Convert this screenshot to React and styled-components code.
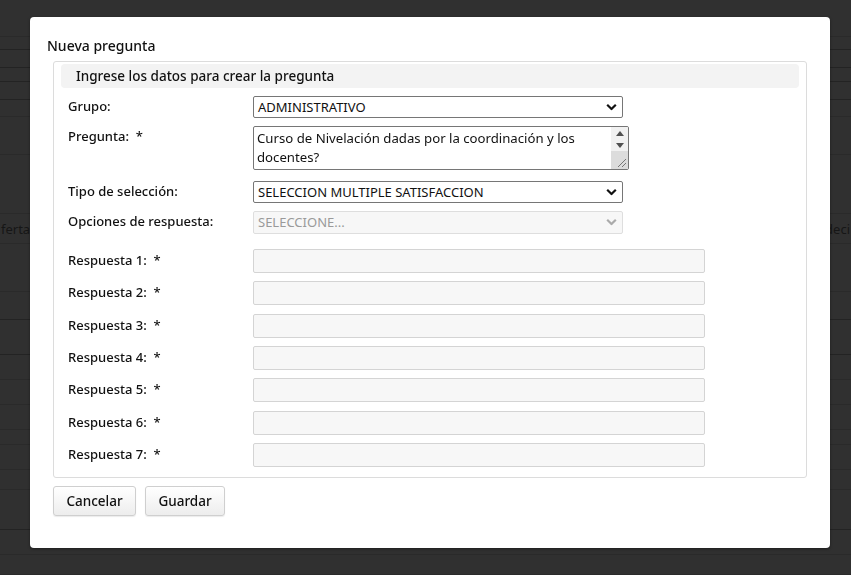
import React from "react";
import styled, { createGlobalStyle } from "styled-components";

const GlobalStyle = createGlobalStyle`
  html, body {
    margin: 0;
    padding: 0;
    background: #303030;
    font-family: "Noto Sans", "Liberation Sans", sans-serif;
    overflow: hidden;
  }
`;

// background page (dimmed table behind the modal)
const Page = styled.div`
  width: 851px;
  height: 575px;
  overflow: hidden;
  background: #303030;
`;

const BgRow = styled.div`
  height: ${(p) => p.$h}px;
  box-sizing: border-box;
  border-bottom: 1px solid ${(p) => (p.$dark ? "#232323" : "#2a2a2a")};
  display: flex;
  justify-content: space-between;
  align-items: center;
  font-size: 13px;
  color: #161616;
  white-space: nowrap;
`;

const BgCellLeft = styled.span`
  margin-left: 1px;
`;

const BgCellRight = styled.span`
  margin-right: 1px;
`;

// modal
const Overlay = styled.div`
  position: fixed;
  inset: 0;
`;

const Modal = styled.div`
  position: absolute;
  left: 30px;
  top: 17px;
  width: 800px;
  height: 531px;
  box-sizing: border-box;
  background: #fff;
  border-radius: 4px;
  padding: 14px 23px 0 23px;
  box-shadow: 0 1px 3px rgba(0, 0, 0, 0.4);
`;

const Title = styled.div`
  height: 30px;
  line-height: 30px;
  font-size: 14px;
  font-weight: 500;
  color: #111;
  margin-left: -6px;
`;

const Fieldset = styled.div`
  border: 1px solid #dcdcdc;
  border-radius: 3px;
  padding: 2px 7px 10px 7px;
  height: 417px;
  box-sizing: border-box;
`;

const Legend = styled.div`
  height: 24px;
  line-height: 24px;
  background: #f3f3f3;
  border-radius: 4px;
  padding-left: 15px;
  font-size: 13.5px;
  font-weight: 500;
  color: #111;
  margin-bottom: 8px;
`;

const Rows = styled.div`
  display: flex;
  flex-direction: column;
  gap: 8.3px;
  padding-left: 7px;
`;

const Row = styled.div`
  display: grid;
  grid-template-columns: 185px 1fr;
  align-items: start;
  margin-bottom: ${(p) => p.$after || 0}px;
`;

const Label = styled.label`
  font-size: 13px;
  font-weight: 500;
  line-height: 20px;
  padding-top: ${(p) => p.$pt || 0}px;
  color: #111;
  white-space: pre;
`;

const SelectWrap = styled.div`
  position: relative;
  width: ${(p) => p.$w}px;
  height: ${(p) => p.$h}px;
`;

const Select = styled.div`
  box-sizing: border-box;
  height: 100%;
  border: 1px solid ${(p) => (p.$disabled ? "#dedede" : "#767676")};
  border-radius: 2px;
  background: ${(p) => (p.$disabled ? "#f7f7f7" : "#fff")};
  color: ${(p) => (p.$disabled ? "#9a9a9a" : "#111")};
  font-size: 13px;
  line-height: ${(p) => p.$h - 2}px;
  padding-left: 4px;
`;

const Chevron = styled.svg`
  position: absolute;
  right: 6px;
  top: 50%;
  transform: translateY(-50%);
`;

const TextAreaWrap = styled.div`
  width: 376px;
  height: 44px;
  box-sizing: border-box;
  border: 1px solid #767676;
  border-radius: 2px;
  display: flex;
  overflow: hidden;
`;

const TextArea = styled.div`
  flex: 1;
  font-size: 13.2px;
  line-height: 19px;
  padding: 2px 3px;
  color: #111;
`;

const ScrollBar = styled.div`
  width: 17px;
  background: #f1f1f1;
  display: flex;
  flex-direction: column;
`;

const ScrollBtn = styled.div`
  height: 12px;
  display: flex;
  align-items: center;
  justify-content: center;
`;

const ScrollRest = styled.div`
  flex: 1;
  background: #dcdcdc;
  position: relative;
`;

const Input = styled.div`
  width: 452px;
  height: 24px;
  box-sizing: border-box;
  background: #f7f7f7;
  border: 1px solid #d4d4d4;
  border-radius: 2px;
`;

const Buttons = styled.div`
  display: flex;
  gap: 9px;
  margin-top: 8px;
`;

const Button = styled.button`
  height: 30px;
  width: ${(p) => p.$w}px;
  box-sizing: border-box;
  border: 1px solid #cfcfcf;
  border-radius: 3px;
  background: linear-gradient(#ffffff, #ededed);
  font-family: "Noto Sans", "Liberation Sans", sans-serif;
  font-size: 13.5px;
  font-weight: 500;
  color: #111;
  padding: 0;
  box-shadow: 0 1px 1px rgba(0, 0, 0, 0.08);
`;

const ChevronIcon = ({ color = "#111" }) => (
  <Chevron width="11" height="7" viewBox="0 0 11 7">
    <path d="M1.2 1.2 L5.5 5.5 L9.8 1.2" fill="none" stroke={color} strokeWidth="2.2" />
  </Chevron>
);

const bgRows = [
  [37], [13, true], [18, true], [14, true], [18, true], [17], [38], [59],
  [30, false, true], [48], [28, true], [35, true], [25], [25], [25], [15], [25], [20], [40, true], [25], [20],
];

const respuestas = [1, 2, 3, 4, 5, 6, 7];

export default function App() {
  return (
    <>
      <GlobalStyle />
      <Page>
        {bgRows.map(([h, dark, text], i) => (
          <BgRow key={i} $h={h} $dark={dark}>
            {text && (
              <>
                <BgCellLeft>fertac</BgCellLeft>
                <BgCellRight>deci</BgCellRight>
              </>
            )}
          </BgRow>
        ))}
      </Page>
      <Overlay>
        <Modal>
          <Title>Nueva pregunta</Title>
          <Fieldset>
            <Legend>Ingrese los datos para crear la pregunta</Legend>
            <Rows>
              <Row>
                <Label>Grupo:</Label>
                <SelectWrap $w={370} $h={22}>
                  <Select $h={22}>ADMINISTRATIVO</Select>
                  <ChevronIcon />
                </SelectWrap>
              </Row>
              <Row $after={2}>
                <Label $pt={0}>{"Pregunta:  *"}</Label>
                <TextAreaWrap>
                  <TextArea>Curso de Nivelación dadas por la coordinación y los docentes?</TextArea>
                  <ScrollBar>
                    <ScrollBtn>
                      <svg width="8" height="5" viewBox="0 0 8 5">
                        <path d="M0 5 L4 0 L8 5 Z" fill="#505050" />
                      </svg>
                    </ScrollBtn>
                    <ScrollBtn>
                      <svg width="8" height="5" viewBox="0 0 8 5">
                        <path d="M0 0 L4 5 L8 0 Z" fill="#505050" />
                      </svg>
                    </ScrollBtn>
                    <ScrollRest>
                      <svg width="17" height="18" viewBox="0 0 17 18" style={{ position: "absolute", bottom: 0, left: 0 }}>
                        <path d="M15 8 L7 16 M15 12 L11 16" stroke="#777" strokeWidth="1" />
                      </svg>
                    </ScrollRest>
                  </ScrollBar>
                </TextAreaWrap>
              </Row>
              <Row>
                <Label>Tipo de selección:</Label>
                <SelectWrap $w={370} $h={22}>
                  <Select $h={22}>SELECCION MULTIPLE SATISFACCION</Select>
                  <ChevronIcon />
                </SelectWrap>
              </Row>
              <Row $after={7}>
                <Label>Opciones de respuesta:</Label>
                <SelectWrap $w={370} $h={23}>
                  <Select $h={23} $disabled>
                    SELECCIONE...
                  </Select>
                  <ChevronIcon color="#aaa" />
                </SelectWrap>
              </Row>
              {respuestas.map((n) => (
                <Row key={n}>
                  <Label $pt={1}>{`Respuesta ${n}:  *`}</Label>
                  <Input />
                </Row>
              ))}
            </Rows>
          </Fieldset>
          <Buttons>
            <Button $w={83}>Cancelar</Button>
            <Button $w={80}>Guardar</Button>
          </Buttons>
        </Modal>
      </Overlay>
    </>
  );
}
